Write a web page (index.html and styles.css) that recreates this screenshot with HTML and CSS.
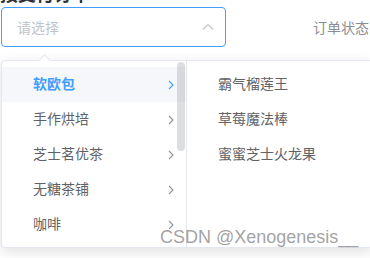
FILE: index.html
```html
<!DOCTYPE html>
<html lang="zh">
<head>
    <meta charset="UTF-8">
    <title>订单</title>
    <link rel="stylesheet" href="styles.css">
</head>
<body>
    <div class="title"><span>按支付订单</span></div>

    <div class="row">
        <div class="select">
            <span class="placeholder">请选择</span>
            <svg class="caret" width="12" height="8" viewBox="0 0 12 8"><polyline points="1,6.5 6,1.5 11,6.5" fill="none" stroke="#c0c4cc" stroke-width="1.2"/></svg>
        </div>
        <span class="label">订单状态</span>
    </div>

    <!-- Menu déroulant du cascader -->
    <div class="dropdown">
        <ul class="menu first">
            <li class="active">软欧包<svg class="chev" width="6" height="10" viewBox="0 0 6 10"><polyline points="1,1 5,5 1,9" fill="none" stroke="#409eff" stroke-width="1.1"/></svg></li>
            <li>手作烘培<svg class="chev" width="6" height="10" viewBox="0 0 6 10"><polyline points="1,1 5,5 1,9" fill="none" stroke="#8f949c" stroke-width="1.1"/></svg></li>
            <li>芝士茗优茶<svg class="chev" width="6" height="10" viewBox="0 0 6 10"><polyline points="1,1 5,5 1,9" fill="none" stroke="#8f949c" stroke-width="1.1"/></svg></li>
            <li>无糖茶铺<svg class="chev" width="6" height="10" viewBox="0 0 6 10"><polyline points="1,1 5,5 1,9" fill="none" stroke="#8f949c" stroke-width="1.1"/></svg></li>
            <li>咖啡<svg class="chev" width="6" height="10" viewBox="0 0 6 10"><polyline points="1,1 5,5 1,9" fill="none" stroke="#8f949c" stroke-width="1.1"/></svg></li>
            <div class="scrollbar"></div>
        </ul>
        <ul class="menu">
            <li>霸气榴莲王</li>
            <li>草莓魔法棒</li>
            <li>蜜蜜芝士火龙果</li>
        </ul>
    </div>

    <div class="watermark">CSDN @Xenogenesis__</div>
</body>
</html>
```

FILE: styles.css
```css
body {
    margin: 0;
    padding: 0;
    font-family: "Liberation Sans", "Noto Sans CJK SC", sans-serif;
    font-size: 14px;
    color: #606266;
    background-color: #fff;
    width: 370px;
    height: 258px;
    overflow: hidden;
    position: relative;
}
.title {
    height: 7px;
    overflow: hidden;
}
.title span {
    display: block;
    margin-top: -14px;
    font-size: 18px;
    line-height: 18px;
    font-weight: bold;
    color: #303133;
}
.row {
    display: flex;
    align-items: center;
    white-space: nowrap;
}
.select {
    margin-left: 1px;
    width: 225px;
    height: 40px;
    box-sizing: border-box;
    border: 1px solid #409eff;
    border-radius: 4px;
    display: flex;
    align-items: center;
    justify-content: space-between;
    padding: 0 11px 0 15px;
    flex-shrink: 0;
}
.placeholder {
    color: #c0c4cc;
}
.label {
    margin-left: 87px;
    color: #8b8e94;
}
/* Styles du menu déroulant */
.dropdown {
    position: absolute;
    left: 1px;
    top: 60px;
    height: 188px;
    box-sizing: border-box;
    display: flex;
    background: #fff;
    border: 1px solid #e4e7ed;
    border-radius: 4px;
    box-shadow: 0 4px 14px rgba(0,0,0,0.12);
}
.dropdown::before {
    content: "";
    position: absolute;
    left: 38px;
    top: -5px;
    width: 8px;
    height: 8px;
    background: #fff;
    border-top: 1px solid #e4e7ed;
    border-left: 1px solid #e4e7ed;
    transform: rotate(45deg);
}
.menu {
    list-style: none;
    margin: 0;
    padding: 6px 0;
    width: 185px;
    position: relative;
    overflow: hidden;
}
.menu.first {
    width: 184px;
    border-right: 1px solid #e4e7ed;
}
.menu li {
    height: 35px;
    line-height: 35px;
    padding-left: 31px;
    display: flex;
    align-items: center;
    position: relative;
    white-space: nowrap;
}
.menu li.active {
    background-color: #f5f7fa;
    color: #409eff;
    font-weight: bold;
}
.chev {
    position: absolute;
    left: 166px;
    top: 13px;
}
.scrollbar {
    position: absolute;
    right: 1px;
    top: 1px;
    width: 8px;
    height: 89px;
    border-radius: 4px;
    background: rgba(144,147,153,0.3);
}
.watermark {
    position: absolute;
    left: 160px;
    top: 227px;
    font-family: "Liberation Sans", sans-serif;
    font-size: 18px;
    color: rgba(110,110,110,0.65);
}
```
